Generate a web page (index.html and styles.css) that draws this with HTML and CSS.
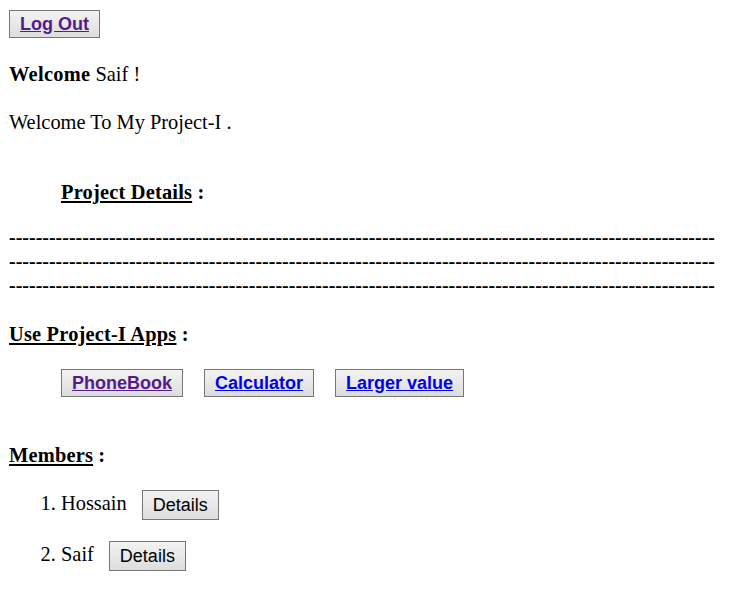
FILE: index.html
```html
<!DOCTYPE html>
<html>
<head>
<meta charset="utf-8">
<link rel="stylesheet" href="styles.css">
</head>
<body>
<div class="top"><button class="btn link-btn"><a class="visited" href="#">Log Out</a></button></div>
<p class="welcome"><b>Welcome</b> Saif !</p>
<p class="intro">Welcome To My Project-I .</p>
<h3 class="heading indent"><u>Project Details</u> :</h3>
<div class="dashes">
<div>----------------------------------------------------------------------------------------------------------</div>
<div>----------------------------------------------------------------------------------------------------------</div>
<div>----------------------------------------------------------------------------------------------------------</div>
</div>
<h3 class="heading apps-head"><u>Use Project-I Apps</u> :</h3>
<div class="apps indent">
<button class="btn link-btn"><a class="visited" href="#">PhoneBook</a></button>
<button class="btn link-btn"><a href="#">Calculator</a></button>
<button class="btn link-btn"><a href="#">Larger value</a></button>
</div>
<h3 class="heading members-head"><u>Members</u> :</h3>
<ol class="members">
<li><span class="name">Hossain</span><button class="btn plain-btn">Details</button></li>
<li><span class="name">Saif</span><button class="btn plain-btn">Details</button></li>
</ol>
</body>
</html>
```

FILE: styles.css
```css
html, body {
  background: #ffffff;
}
body {
  margin: 8px 8px 8px 9px;
  font-family: "Liberation Serif", "Times New Roman", serif;
  font-size: 20.4px;
  line-height: 23px;
  color: #000000;
}
.top {
  padding-top: 2px;
  height: 28px;
}
.btn {
  box-sizing: border-box;
  height: 28px;
  margin: 0;
  padding: 0 10px;
  border: 1px solid #767676;
  border-radius: 0;
  background: linear-gradient(#f3f3f3, #dddddd);
  font-family: "Liberation Sans", Arial, sans-serif;
  font-size: 18px;
  line-height: 26px;
  color: #000000;
  vertical-align: middle;
}
.link-btn a {
  font-weight: bold;
  color: #0000ee;
  text-decoration: underline;
}
.link-btn a.visited {
  color: #551a8b;
}
p {
  margin: 0;
}
b {
  letter-spacing: 0.3px;
}
.welcome {
  margin-top: 25px;
}
.intro {
  margin-top: 25px;
}
.heading {
  margin: 0;
  font-size: 20.4px;
  font-weight: bold;
  letter-spacing: 0.2px;
  line-height: 23px;
}
.indent {
  margin-left: 52px;
}
.heading.indent {
  margin-top: 47px;
}
.dashes {
  margin-top: 21px;
  font-size: 20px;
  font-weight: bold;
  line-height: 24px;
  white-space: nowrap;
}
.apps-head {
  margin-top: 26px;
}
.apps {
  display: flex;
  gap: 21px;
  margin-top: 23px;
}
.members-head {
  margin-top: 47px;
}
.members {
  margin: 23px 0 0 0;
  padding-left: 52px;
}
.members li {
  margin-bottom: 21px;
  line-height: 23px;
}
.name {
  margin-right: 15px;
}
.plain-btn {
  height: 30px;
  padding: 0 10px;
}
```
